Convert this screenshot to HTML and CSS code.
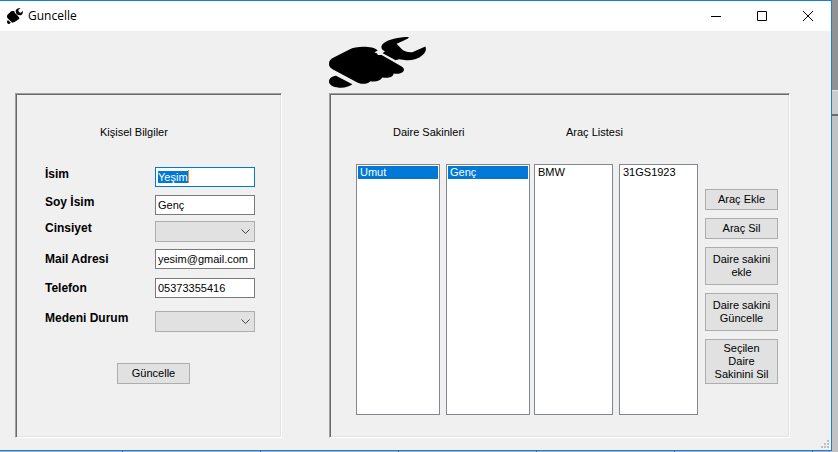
FILE: index.html
```html
<!DOCTYPE html>
<html lang="tr">
<head>
<meta charset="utf-8">
<title>Guncelle</title>
<link rel="stylesheet" href="styles.css">
</head>
<body>
<svg class="defs" aria-hidden="true">
  <symbol id="fist" viewBox="12 9 291 151" preserveAspectRatio="none">
    <path d="M12 89C12 80 16 75 26 70L72 47C84 40 98 38 115 38C134 38 150 41 158 49L148 55L157 58L158 62L170 62L230 96C238 101 239 107 234 112C228 118 216 119 206 117C204 128 190 132 172 129C166 140 150 143 136 140C128 149 108 150 97 144L24 105C15 100 12 96 12 89Z"/>
    <path d="M33 124L82 149C72 157 58 160 42 159C24 158 12 151 12 141C12 132 20 126 33 124Z"/>
    <path d="M250 9C254 12 247 15 240 18L215 29L229 44C236 52 248 55 262 54L301 37C305 46 302 55 292 63C280 74 262 79 244 78L222 75L212 78L173 57L180 51C168 47 166 37 174 29C188 16 222 9 250 9Z"/>
  </symbol>
</svg>
<div class="window">
  <header class="titlebar">
    <svg class="app-icon" aria-hidden="true"><use href="#fist"/></svg>
    <h1>Guncelle</h1>
    <button type="button" class="caption" aria-label="Simge durumuna küçült"><svg viewBox="0 0 10 10"><path d="M0 5.5H10"/></svg></button>
    <button type="button" class="caption" aria-label="Ekranı kapla"><svg viewBox="0 0 10 10"><path d="M.5 .5H9.5V9.5H.5Z"/></svg></button>
    <button type="button" class="caption" aria-label="Kapat"><svg viewBox="0 0 10 10"><path d="M0 0L10 10M10 0L0 10"/></svg></button>
  </header>
  <main class="client">
    <form class="panel person">
      <h2>Kişisel Bilgiler</h2>
      <div class="fields">
        <label for="isim">İsim</label>
        <div class="edit"><input id="isim" class="active" value="Yeşim"><span class="caret"></span></div>
        <label for="soyisim">Soy İsim</label>
        <input id="soyisim" value="Genç">
        <label for="cinsiyet">Cinsiyet</label>
        <select id="cinsiyet" class="combo"><option></option><option label="Kadın"></option><option label="Erkek"></option></select>
        <label for="mail" class="middle">Mail Adresi</label>
        <input id="mail" value="yesim@gmail.com">
        <label for="telefon" class="middle">Telefon</label>
        <input id="telefon" value="05373355416">
        <label for="medeni">Medeni Durum</label>
        <select id="medeni" class="combo"><option></option><option label="Evli"></option><option label="Bekar"></option></select>
      </div>
      <button type="button" class="button submit">Güncelle</button>
    </form>
    <section class="residents">
      <svg class="logo" aria-hidden="true"><use href="#fist"/></svg>
      <div class="panel lists">
        <div class="group people">
          <h2>Daire Sakinleri</h2>
          <div class="boxes">
            <select size="4" aria-label="Ad"><option selected>Umut</option></select>
            <select size="4" aria-label="Soyad"><option selected>Genç</option></select>
          </div>
        </div>
        <div class="group cars">
          <h2>Araç Listesi</h2>
          <div class="boxes">
            <select size="4" aria-label="Araç"><option>BMW</option></select>
            <select size="4" aria-label="Plaka"><option>31GS1923</option></select>
          </div>
        </div>
        <div class="actions">
          <button type="button" class="button">Araç Ekle</button>
          <button type="button" class="button">Araç Sil</button>
          <button type="button" class="button">Daire sakini ekle</button>
          <button type="button" class="button">Daire sakini Güncelle</button>
          <button type="button" class="button">Seçilen Daire Sakinini Sil</button>
        </div>
      </div>
    </section>
  </main>
  <svg class="grip" viewBox="0 0 8 8" aria-hidden="true"><path d="M6 0h2v2H6zM3 3h2v2H3zM6 3h2v2H6zM0 6h2v2H0zM3 6h2v2H3zM6 6h2v2H6z"/></svg>
</div>
<script>
  const first = document.getElementById("isim");
  first.focus();
  first.select();
</script>
</body>
</html>
```
FILE: styles.css
```css
* { box-sizing: border-box; }

body {
  margin: 0;
  padding: 0 6px 1px 0;
  min-height: 100vh;
  display: flex;
  font: 11px/13px "Liberation Sans", Arial, sans-serif;
  color: #000;
  background:
    linear-gradient(#929292 90px, #e4e4e4 90px, #e4e4e4 91px, #cbcbcb 91px, #cbcbcb 114px, #6b6b6b 114px, #6b6b6b 116px, #c2c2c2 116px) right / 6px 100% no-repeat,
    repeating-linear-gradient(90deg, #a5b4c0 0 122px, #4a5a68 122px 123px, #a5b4c0 123px 138px);
}

h1, h2 { margin: 0; font-weight: normal; }
h2 { font-size: 11px; line-height: 13px; }
button, input, select { font: inherit; color: inherit; margin: 0; border-radius: 0; }

.defs { position: absolute; width: 0; height: 0; }

.window {
  position: relative;
  flex: 1;
  display: flex;
  flex-direction: column;
  border: solid #1a7fd4;
  border-width: 1px 1px 1px 0;
  background: #f0f0f0;
}

.titlebar {
  display: flex;
  align-items: center;
  height: 30px;
  padding-left: 7px;
  background: #fff;
}
.titlebar h1 { flex: 1; font: 12px/16px "Open Sans", "Noto Sans", sans-serif; }
.app-icon { width: 16px; height: 16px; margin-right: 5px; }
.caption {
  width: 46px;
  height: 30px;
  padding: 0;
  border: 0;
  background: none;
  display: grid;
  place-items: center;
}
.caption svg { width: 10px; height: 10px; fill: none; stroke: #000; }

.client {
  flex: 1;
  display: grid;
  grid-template-columns: 267fr 461fr;
  gap: 47px;
  padding: 6px 41px 12px 15px;
}

.panel {
  border: 1px solid;
  border-color: #a0a0a0 #fff #fff #a0a0a0;
  box-shadow: inset 1px 1px #696969, inset -1px -1px #e3e3e3;
}

.person { margin-top: 56px; padding: 32px 26px 0 29px; }
.person h2 { padding-left: 55px; }
.fields {
  display: grid;
  grid-template-columns: 110px 1fr;
  grid-template-rows: 28px 26px 28px 29px 33px 21px;
  align-items: start;
  margin-top: 28px;
}
.fields label { font-size: 12px; font-weight: bold; line-height: 14px; }
.fields label.middle { line-height: 20px; }
.fields input {
  display: block;
  width: 100%;
  height: 20px;
  padding: 0 2px;
  border: 1px solid #7a7a7a;
  background: #fff;
  outline: 0;
}
.fields input.active { border-color: #0078d7; }
.fields input::selection { background: #0078d7; color: #fff; }
.edit { position: relative; }
.caret { position: absolute; left: 33px; top: 3px; width: 1px; height: 13px; background: #ff8728; }

.combo {
  appearance: none;
  width: 100%;
  height: 21px;
  border: 1px solid #adadad;
  background: #e1e1e1 url("data:image/svg+xml,%3Csvg xmlns='http://www.w3.org/2000/svg' width='9' height='6'%3E%3Cpath d='M.5 .5L4.5 4.5L8.5 .5' fill='none' stroke='%23444'/%3E%3C/svg%3E") right 4px center no-repeat;
}

.button {
  padding: 0 4px;
  border: 1px solid #adadad;
  background: #e1e1e1;
  text-align: center;
}
.submit { display: block; width: 73px; height: 21px; margin: 31px 0 0 72px; }

.residents { display: flex; flex-direction: column; }
.logo { width: 97px; height: 51px; flex: none; margin-bottom: 5px; }

.lists {
  flex: 1;
  display: grid;
  grid-template-columns: 174fr 164fr 73px;
  padding: 32px 11px 22px 26px;
}
.group { display: flex; flex-direction: column; gap: 25px; }
.people { margin-right: 4px; }
.cars { margin-right: 7px; }
.lists { grid-template-columns: 178fr 171fr 73px; }
.people h2 { padding-left: 37px; }
.cars h2 { padding-left: 32px; }
.boxes { flex: 1; display: flex; gap: 6px; }
.boxes select {
  appearance: none;
  flex: 1;
  width: 0;
  padding: 1px;
  border: 1px solid #828790;
  background: #fff;
  overflow: hidden;
  outline: 0;
}
.boxes option { min-height: 13px; padding: 0 2px; line-height: 13px; }
.boxes option:checked { background: #0078d7 linear-gradient(#0078d7, #0078d7); color: #fff; }

.actions {
  display: grid;
  grid-template-rows: 21px 21px 38px 38px 45px;
  gap: 8px;
  align-content: start;
  padding-top: 63px;
}

.grip { position: absolute; right: 2px; bottom: 2px; width: 8px; height: 8px; fill: #bfbfbf; }
```
